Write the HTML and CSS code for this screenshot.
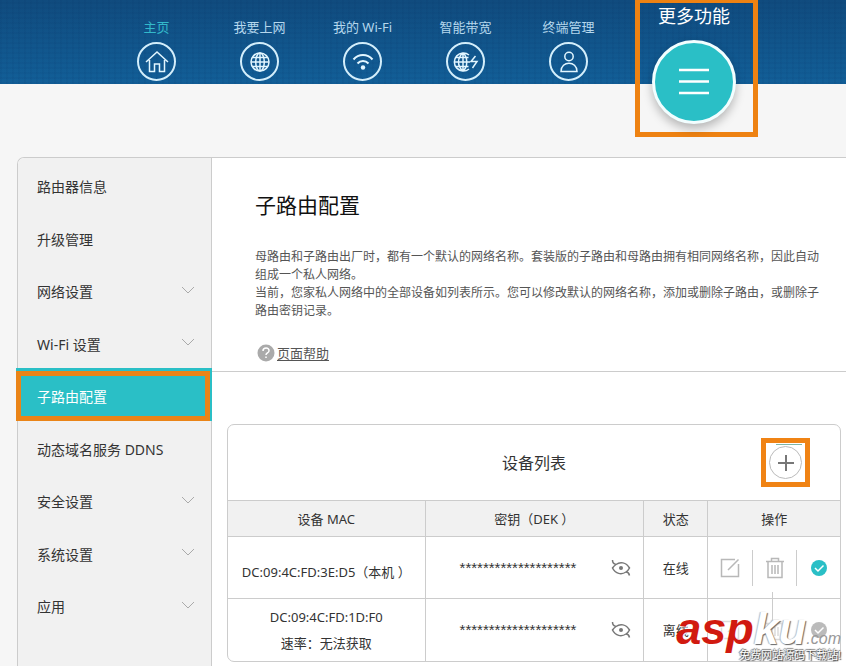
FILE: index.html
```html
<!DOCTYPE html>
<html lang="zh-CN">
<head>
<meta charset="utf-8">
<title>子路由配置</title>
<link rel="stylesheet" href="styles.css">
</head>
<body>
<svg class="defs" aria-hidden="true">
  <symbol id="globe" viewBox="0 0 20 20"><circle cx="10" cy="10" r="9"/><ellipse cx="10" cy="10" rx="4.3" ry="9"/><path d="M10 1v18M1 10h18M2.5 5.5h15M2.5 14.5h15"/></symbol>
  <symbol id="chevron" viewBox="0 0 14 8"><path d="M1 1l6 6 6-6"/></symbol>
  <symbol id="eye" viewBox="0 0 20 18"><path d="M1.500 1c0 3 1.500 4 3.500 4.500 4-3 10-2.500 13.500 3.500-1 2-2 3-3.500 4 2 0 3 1 3.500 3.500M5 5.500C3.500 6.500 2.500 7.500 1.500 9c3 6 9 7 13.500 4"/><circle class="pupil" cx="10" cy="9" r="2"/></symbol>
  <symbol id="edit" viewBox="0 0 20 20"><path d="M15 1.500H1.500v17h17V6M8 12L18.500 1.500"/></symbol>
  <symbol id="trash" viewBox="0 0 20 22"><path d="M1 4.500h18M6.500 4.500V1.500h7v3M3 4.500v16h14v-16M7 8v9M10 8v9M13 8v9"/></symbol>
  <symbol id="check" viewBox="0 0 16 16"><circle class="disc" cx="8" cy="8" r="8"/><path d="M4 8l3 3 5.500-5.500"/></symbol>
</svg>

<header class="topbar">
  <nav class="nav">
    <a class="nav-item current" href="#">主页
      <span class="ring"><svg class="icon-home" viewBox="0 0 24 24"><path d="M1 12L12 2l11 10M4.500 10v11.500h5V14h5v7.500h5V10"/></svg></span></a>
    <a class="nav-item" href="#">我要上网
      <span class="ring"><svg class="icon-globe"><use href="#globe"/></svg></span></a>
    <a class="nav-item" href="#">我的 Wi-Fi
      <span class="ring"><svg class="icon-wifi" viewBox="0 0 22 18"><path d="M1.500 6.500c5-6 14-6 19 0M5.500 10.500c3-3.500 8-3.500 11 0"/><circle class="pupil" cx="11" cy="14.500" r="2.200"/></svg></span></a>
    <a class="nav-item" href="#">智能带宽
      <span class="ring"><svg class="icon-band" viewBox="0 0 26 20"><path d="M16 3a9 9 0 1 0 0 14M10 1v18M1 10h16M2.500 5.500h13M2.500 14.500h13M10 1c-6 5-6 13 0 18M10 1c5 4 5 14 0 18M22.500 4l-4.500 5.500h6L19.500 16"/></svg></span></a>
    <a class="nav-item" href="#">终端管理
      <span class="ring"><svg class="icon-user" viewBox="0 0 20 22"><circle cx="10" cy="5.500" r="4.200"/><path d="M2 20.500c0-11 16-11 16 0z"/></svg></span></a>
    <a class="nav-more" href="#">更多功能
      <span class="menu-disc"><svg viewBox="0 0 32 28"><path d="M1 2h30M1 13.500h30M1 25h30"/></svg></span></a>
  </nav>
</header>

<div class="panel">
  <aside class="sidebar">
    <ul>
      <li><a href="#"><span>路由器信息</span></a></li>
      <li><a href="#"><span>升级管理</span></a></li>
      <li><a href="#"><span>网络设置</span><svg><use href="#chevron"/></svg></a></li>
      <li><a href="#"><span>Wi-Fi 设置</span><svg><use href="#chevron"/></svg></a></li>
      <li class="active"><a href="#"><span>子路由配置</span></a></li>
      <li><a href="#"><span>动态域名服务 DDNS</span></a></li>
      <li><a href="#"><span>安全设置</span><svg><use href="#chevron"/></svg></a></li>
      <li><a href="#"><span>系统设置</span><svg><use href="#chevron"/></svg></a></li>
      <li><a href="#"><span>应用</span><svg><use href="#chevron"/></svg></a></li>
    </ul>
  </aside>
  <main class="content">
    <section class="intro">
      <h1>子路由配置</h1>
      <p>母路由和子路由出厂时，都有一个默认的网络名称。套装版的子路由和母路由拥有相同网络名称，因此自动组成一个私人网络。</p>
      <p>当前，您家私人网络中的全部设备如列表所示。您可以修改默认的网络名称，添加或删除子路由，或删除子路由密钥记录。</p>
      <a class="help" href="#"><svg viewBox="0 0 18 18"><circle class="disc" cx="9" cy="9" r="8.500"/><path d="M6 7c0-4 6.500-4 6 0-.3 2-3 2-3 4M9 12.500v1.500"/></svg><span>页面帮助</span></a>
    </section>
    <section class="devices">
      <div class="devices-head">
        <h2>设备列表</h2>
        <div class="add-mark"><button class="add" type="button" aria-label="添加"><svg viewBox="0 0 16 16"><path d="M8 0v16M0 8h16"/></svg></button></div>
      </div>
      <table>
        <colgroup><col class="c-mac"><col class="c-key"><col class="c-state"><col class="c-ops"></colgroup>
        <thead><tr><th>设备 MAC</th><th>密钥（DEK ）</th><th>状态</th><th>操作</th></tr></thead>
        <tbody>
          <tr>
            <td class="own">DC:09:4C:FD:3E:D5（本机 ）</td>
            <td><div class="key"><span>********************</span><button type="button" aria-label="显示密钥"><svg><use href="#eye"/></svg></button></div></td>
            <td>在线</td>
            <td><div class="ops">
              <button type="button" aria-label="编辑"><svg class="i-edit"><use href="#edit"/></svg></button>
              <button type="button" aria-label="删除"><svg class="i-trash"><use href="#trash"/></svg></button>
              <span class="ok"><svg class="i-check"><use href="#check"/></svg></span></div></td>
          </tr>
          <tr>
            <td>DC:09:4C:FD:1D:F0<br>速率：无法获取</td>
            <td><div class="key"><span>********************</span><button type="button" aria-label="显示密钥"><svg><use href="#eye"/></svg></button></div></td>
            <td>离线</td>
            <td><div class="ops off">
              <button type="button" aria-label="编辑"><svg class="i-edit"><use href="#edit"/></svg></button>
              <button type="button" aria-label="删除"><svg class="i-trash"><use href="#trash"/></svg></button>
              <span class="ok"><svg class="i-check"><use href="#check"/></svg></span></div></td>
          </tr>
        </tbody>
      </table>
      <div class="watermark">
        <div class="brand"><b>asp</b><i>ku</i><small>.com</small></div>
        <div class="slogan">免费网站源码下载站!</div>
      </div>
    </section>
  </main>
</div>
</body>
</html>
```
FILE: styles.css
```css
* { box-sizing: border-box; }
body {
  margin: 0;
  background: #f6f6f6;
  color: #333;
  font: 13px/20px "Noto Sans", "Noto Sans CJK SC", sans-serif;
  overflow: hidden;
}
a { color: inherit; text-decoration: none; }
h1, h2, p, ul { margin: 0; padding: 0; font-weight: 400; }
ul { list-style: none; }
button { border: 0; padding: 0; background: none; color: inherit; font: inherit; }
svg { display: block; fill: none; stroke: currentColor; }
.defs { position: absolute; width: 0; height: 0; }
.pupil { fill: currentColor; stroke: none; }
.disc { fill: currentColor; stroke: none; }

/* top navigation */
.topbar {
  height: 84px;
  background:
    repeating-linear-gradient(90deg, rgba(4, 40, 90, .06) 0 2px, transparent 2px 6px),
    repeating-linear-gradient(0deg, rgba(4, 40, 90, .06) 0 2px, transparent 2px 5px),
    linear-gradient(180deg, #104b7e, #125f98);
}
.nav { display: flex; padding-left: 105px; }
.nav-item {
  display: flex;
  flex-direction: column;
  align-items: center;
  gap: 5px;
  width: 103px;
  padding-top: 17px;
  color: #b5d7ed;
}
.nav-item.current { color: #33b9cb; }
.ring {
  display: grid;
  place-items: center;
  width: 39px;
  height: 39px;
  border: 2px solid #d3eefb;
  border-radius: 50%;
  color: #e2f6ff;
  stroke-width: 1.5;
}
.icon-home { width: 24px; height: 24px; }
.icon-globe { width: 20px; height: 20px; }
.icon-wifi { width: 22px; height: 18px; stroke-width: 2; }
.icon-band { width: 26px; height: 20px; }
.icon-user { width: 20px; height: 22px; }
.nav-more {
  display: flex;
  flex-direction: column;
  align-items: center;
  gap: 12px;
  width: 123px;
  height: 137px;
  margin-left: 15px;
  padding: 1px 5px 0 0;
  border: 5px solid #ee8212;
  border-top-width: 3px;
  color: #fff;
  font-size: 18px;
  line-height: 24px;
}
.menu-disc {
  display: grid;
  flex: none;
  place-items: center;
  width: 84px;
  height: 84px;
  border: 3px solid #f2feff;
  border-radius: 50%;
  background: #2abfc6;
  box-shadow: 0 5px 10px rgba(0, 0, 0, .25);
}
.menu-disc svg { width: 32px; height: 28px; stroke-width: 2.5; }

/* main panel */
.panel {
  display: flex;
  min-height: 520px;
  margin: 73px 0 0 17px;
  border: 1px solid #ccc;
  border-right: 0;
  border-top-left-radius: 7px;
  background: #fff;
}
.sidebar {
  flex: none;
  width: 194px;
  border-right: 1px solid #ccc;
  border-top-left-radius: 6px;
  background: #f1f1f1;
  font-size: 14px;
}
.sidebar ul { display: grid; grid-auto-rows: 53px 52px; }
.sidebar a {
  display: flex;
  align-items: center;
  justify-content: space-between;
  height: 100%;
  padding: 0 16px 0 19px;
}
.sidebar span { padding-top: 5px; }
.sidebar svg { width: 14px; height: 8px; color: #aaa; }
.sidebar .active {
  margin: 0 -1px 0 -2px;
  border-top: 3px solid #2abfc6;
  border-right: 2px solid #2abfc6;
  background: #2abfc6;
  color: #fff;
}
.sidebar .active a { padding-left: 16px; border: 5px solid #ea8417; }
.sidebar .active span { padding-top: 2px; }

.content { flex: 1; min-width: 0; }
.intro {
  height: 214px;
  padding: 31px 20px 0 43px;
  border-bottom: 1px solid #ccc;
}
.intro h1 { margin-bottom: 27px; color: #111; font-size: 21px; line-height: 32px; }
.intro p { color: #555; font-size: 12px; line-height: 18px; }
.help {
  display: inline-flex;
  align-items: center;
  gap: 2px;
  margin-top: 23px;
  padding-left: 2px;
  color: #555;
}
.help span { text-decoration: underline; text-underline-offset: 2px; }
.help svg { width: 18px; height: 18px; color: #aaa; }
.help path { stroke: #fff; stroke-width: 1.5; }

/* device table */
.devices {
  position: relative;
  margin: 52px 5px 0 15px;
  border: 1px solid #ccc;
  border-radius: 7px;
}
.devices-head {
  display: grid;
  grid-template-columns: 1fr auto 1fr;
  align-items: center;
  height: 75px;
  padding-right: 30px;
}
.devices-head h2 { grid-column: 2; padding-left: 30px; font-size: 16px; line-height: 24px; }
.add-mark {
  justify-self: end;
  border: 5px solid #f08314;
  padding: 3px;
  background: linear-gradient(#7fb5a5, #7fb5a5) 10px 1px / 26px 1px no-repeat;
}
.add {
  display: grid;
  place-items: center;
  width: 33px;
  height: 33px;
  border: 1px solid #bbb;
  border-radius: 50%;
  color: #777;
}
.add svg { width: 16px; height: 16px; stroke-width: 2; }
table { width: 100%; border-collapse: collapse; table-layout: fixed; text-align: center; }
.c-mac { width: 32.2%; }
.c-key { width: 35.7%; }
.c-state { width: 10.5%; }
.c-ops { width: 21.6%; }
th, td { padding: 0; border: 1px solid #ccc; border-width: 1px 0 0 1px; font-weight: 400; }
th:first-child, td:first-child { border-left: 0; }
th { height: 36px; background: #f1f1f1; }
td { height: 62px; line-height: 26px; }
.own { padding-top: 8px; }
.key { display: flex; align-items: center; justify-content: space-between; padding: 0 12px 0 34px; }
.key span { font-family: "Liberation Sans", sans-serif; font-size: 15px; }
.key svg { width: 20px; height: 18px; color: #777; stroke-width: 1.5; }
.ops { display: grid; grid-template-columns: repeat(3, 1fr); }
.ops > * { display: grid; place-items: center; height: 36px; border-left: 1px solid #ccc; color: #b8b8b8; }
.ops > :first-child { border-left: 0; }
.ops .ok { color: #2abfc6; }
.ops.off > * { border-left-color: transparent; color: #dcdcdc; }
.ops.off .ok { color: #bbb; }
.i-edit { width: 20px; height: 20px; stroke-width: 1.5; }
.i-trash { width: 20px; height: 22px; stroke-width: 1.5; }
.i-check { width: 16px; height: 16px; stroke: #fff; stroke-width: 1.5; }

.watermark { position: absolute; right: -1px; bottom: -1px; text-align: right; white-space: nowrap; }
.watermark::before {
  content: "";
  position: absolute;
  left: 96px;
  top: -14px;
  height: 34px;
  border-left: 1px solid #ccc;
}
.brand {
  position: relative;
  font-family: "Liberation Sans", sans-serif;
  font-size: 45px;
  font-style: italic;
  line-height: 46px;
}
.brand b { color: #d11a10; text-shadow: 1px 1px 1px #fff; }
.brand i { color: #fff; font-weight: 700; text-shadow: 1px 1px 1px #666, -1px 0 1px #bbb; }
.brand small { color: #999; font-size: 16px; }
.slogan {
  position: relative;
  margin-top: -14px;
  color: #fff;
  font-size: 11px;
  line-height: 14px;
  text-shadow: 1px 1px 1px #333, -1px 0 1px #777, 0 -1px 1px #777;
}
```
